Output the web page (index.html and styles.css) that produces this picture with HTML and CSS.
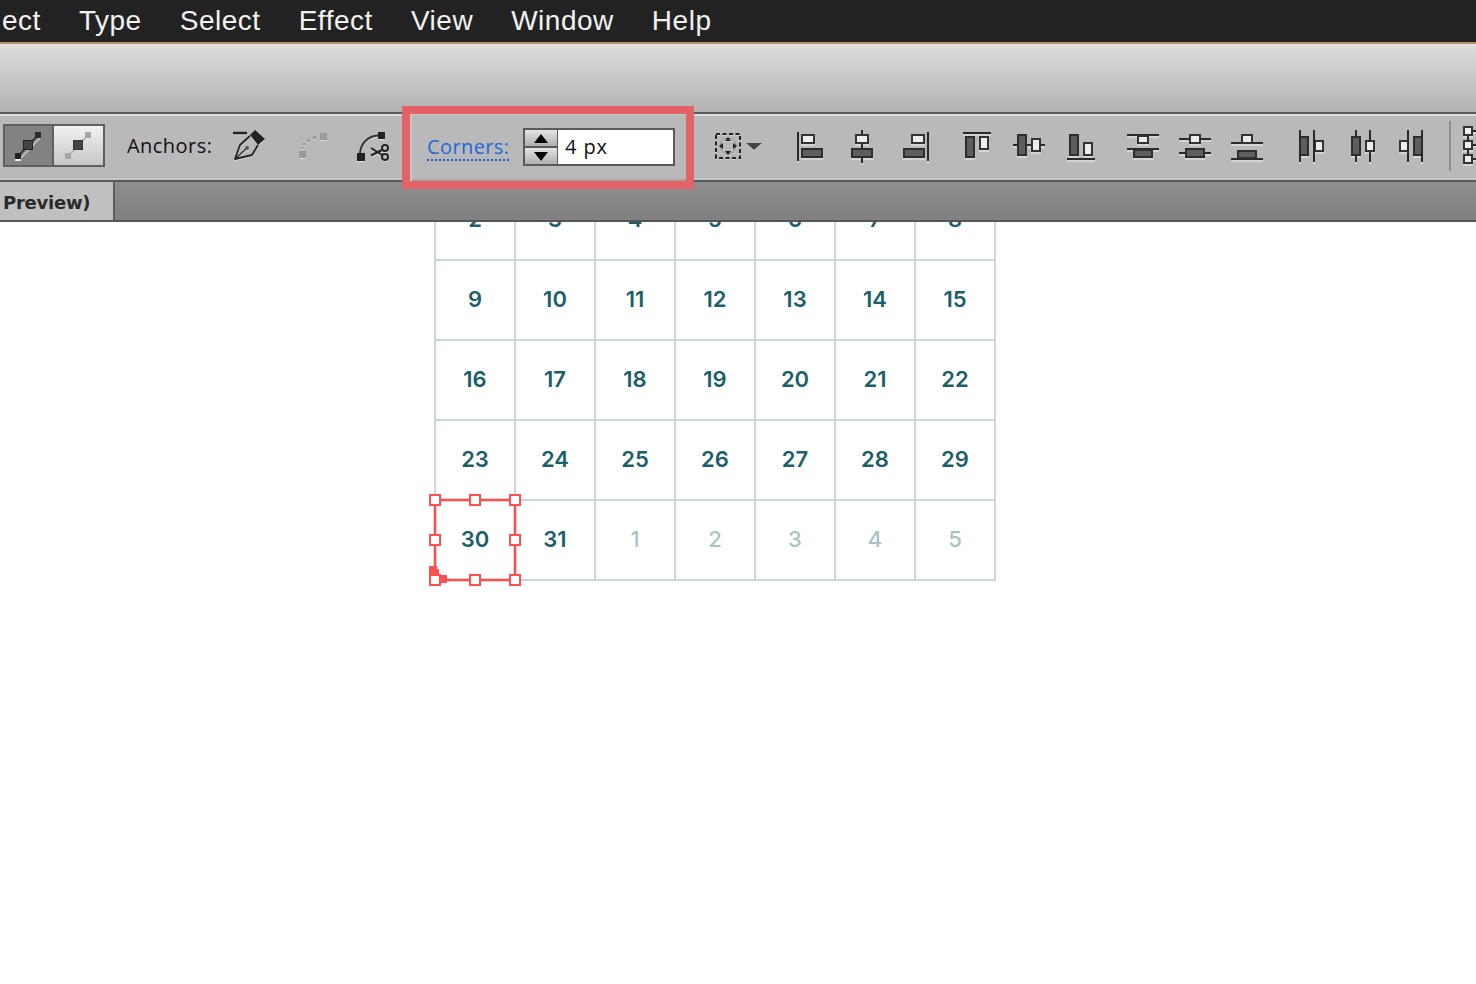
FILE: index.html
```html
<!DOCTYPE html>
<html lang="en">
<head>
<meta charset="utf-8">
<title>Corners</title>
<link rel="stylesheet" href="styles.css">
</head>
<body>
<nav class="menubar">
  <span>ect</span><span>Type</span><span>Select</span><span>Effect</span><span>View</span><span>Window</span><span>Help</span>
</nav>
<div class="appbar"></div>
<div class="toolbar">
  <div class="segmented">
    <div class="seg seg-on">
      <svg width="47" height="39" viewBox="0 0 47 39"><path d="M14 31L34 10" stroke="#c8c8c8" stroke-width="1.500" transform="translate(1 2)"/><path d="M13 30L33 9" stroke="#222" stroke-width="1.500"/><rect x="30" y="6" width="6" height="6" fill="#2b2b2b"/><rect x="18.500" y="14.500" width="9" height="9" fill="#444" stroke="#222"/><rect x="10" y="27" width="6" height="6" fill="#222"/><rect x="10" y="33" width="6" height="2" fill="#eee"/></svg>
    </div>
    <div class="seg seg-off">
      <svg width="47" height="39" viewBox="0 0 47 39"><path d="M13 30L33 9" stroke="#aaa" stroke-width="1.500"/><rect x="30" y="6" width="6" height="6" fill="#a6a6a6"/><rect x="18.500" y="14.500" width="9" height="9" fill="#444" stroke="#333"/><rect x="10" y="27" width="6" height="6" fill="#a6a6a6"/></svg>
    </div>
  </div>
  <span class="label anchors">Anchors:</span>
  <svg class="tool pen" width="34" height="34" viewBox="0 0 34 34"><path d="M0 4H14" stroke="#222" stroke-width="2.500"/><path d="M22 1L32 10L25 16L17 6Z" fill="#222"/><path d="M17 7L7 16L2 30L19 26L25 16" fill="none" stroke="#222" stroke-width="1.800" stroke-linejoin="round"/><path d="M2 30L14 19" stroke="#222" stroke-width="1.200"/><circle cx="14" cy="19" r="2" fill="#555"/></svg>
  <svg class="tool dim" width="30" height="28" viewBox="0 0 30 28"><rect x="1" y="19" width="7" height="7" fill="#999"/><rect x="22" y="1" width="7" height="7" fill="#999"/><rect x="3" y="15" width="2" height="2" fill="#999"/><rect x="5" y="11" width="2" height="2" fill="#999"/><rect x="9" y="7" width="3" height="3" fill="#999"/><rect x="15" y="4" width="3" height="3" fill="#999"/></svg>
  <svg class="tool scissors" width="34" height="30" viewBox="0 0 34 30"><path d="M4 22C5 12 12 5 22 4.500" fill="none" stroke="#333" stroke-width="2"/><rect x="22" y="1" width="7" height="7" fill="#222"/><rect x="1" y="22" width="8" height="8" fill="#222"/><path d="M15 17L27 24.500M15 24.500L27 18.500" stroke="#222" stroke-width="2"/><circle cx="29" cy="17" r="3" fill="none" stroke="#222" stroke-width="2"/><circle cx="29" cy="26" r="3" fill="none" stroke="#222" stroke-width="2"/></svg>
  <div class="corners">
    <a class="corners-link">Corners:</a>
    <div class="spinner">
      <div class="stepper">
        <div class="step"><svg width="14" height="9" viewBox="0 0 14 9"><path d="M7 0L14 9H0Z" fill="#000"/></svg></div>
        <div class="step"><svg width="14" height="9" viewBox="0 0 14 9"><path d="M0 0H14L7 9Z" fill="#000"/></svg></div>
      </div>
      <div class="value">4 px</div>
    </div>
  </div>
  <svg class="ref-point" width="28" height="28" viewBox="0 0 28 28"><rect x="2" y="2" width="24" height="24" fill="none" stroke="#222" stroke-width="2" stroke-dasharray="4 2.5"/><circle cx="14" cy="14" r="8" fill="none" stroke="#888" stroke-width="1"/><path d="M14 5l3 4h-6zM14 23l3-4h-6zM5 14l4-3v6zM23 14l-4-3v6z" fill="#222"/></svg>
  <svg class="ref-caret" width="16" height="7" viewBox="0 0 16 7"><path d="M0 0H16L8 7Z" fill="#444"/></svg>
  <div class="aligns group-a">
    <svg class="al" width="36" height="36" viewBox="792 128 36 36"><path d="M798 132V161" class="ln"/><rect x="802" y="135" width="12" height="8" class="lt"/><rect x="802" y="149" width="20" height="8" class="dk"/></svg>
    <svg class="al" width="36" height="36" viewBox="844 128 36 36"><path d="M862 130V163" class="ln"/><rect x="856" y="135" width="12" height="8" class="lt"/><rect x="852" y="149" width="20" height="8" class="dk"/></svg>
    <svg class="al nudge-right" width="36" height="36" viewBox="898 128 36 36"><path d="M928 132V161" class="ln"/><rect x="912" y="135" width="12" height="8" class="lt"/><rect x="904" y="149" width="20" height="8" class="dk"/></svg>
  </div>
  <div class="aligns group-b">
    <svg class="al" width="36" height="36" viewBox="959 128 36 36"><path d="M963 133H991" class="ln"/><rect x="966" y="137" width="8" height="20" class="dk"/><rect x="980" y="137" width="8" height="12" class="lt"/></svg>
    <svg class="al" width="36" height="36" viewBox="1011 128 36 36"><path d="M1013 145H1045" class="ln"/><rect x="1018" y="135" width="8" height="20" class="dk"/><rect x="1032" y="139" width="8" height="12" class="lt"/></svg>
    <svg class="al" width="36" height="36" viewBox="1063 128 36 36"><path d="M1067 159H1095" class="ln"/><rect x="1070" y="135" width="8" height="20" class="dk"/><rect x="1084" y="143" width="8" height="12" class="lt"/></svg>
  </div>
  <div class="aligns group-c">
    <svg class="al" width="36" height="36" viewBox="1125 128 36 36"><path d="M1127 135H1159M1127 149H1159" class="ln"/><rect x="1138" y="136" width="10" height="7" class="lt"/><rect x="1134" y="150" width="18" height="7" class="dk"/></svg>
    <svg class="al" width="36" height="36" viewBox="1177 128 36 36"><path d="M1179 139H1211M1179 153H1211" class="ln"/><rect x="1190" y="135" width="10" height="8" class="lt"/><rect x="1186" y="149" width="18" height="8" class="dk"/></svg>
    <svg class="al" width="36" height="36" viewBox="1229 128 36 36"><path d="M1231 143H1263M1231 159H1263" class="ln"/><rect x="1242" y="135" width="10" height="8" class="lt"/><rect x="1238" y="151" width="18" height="7" class="dk"/></svg>
  </div>
  <div class="aligns group-d">
    <svg class="al" width="36" height="36" viewBox="1293 128 36 36"><rect x="1300" y="137" width="8" height="18" class="dk"/><rect x="1315" y="141" width="8" height="10" class="lt"/><path d="M1300 130V162M1314 130V162" class="ln"/></svg>
    <svg class="al" width="36" height="36" viewBox="1345 128 36 36"><path d="M1356 130V162M1370 130V162" class="ln"/><rect x="1352" y="137" width="8" height="18" class="dk"/><rect x="1366" y="141" width="8" height="10" class="lt"/></svg>
    <svg class="al nudge-left" width="36" height="36" viewBox="1393 128 36 36"><rect x="1400" y="141" width="8" height="10" class="lt"/><rect x="1414" y="137" width="8" height="18" class="dk"/><path d="M1408 130V162M1422 130V162" class="ln"/></svg>
  </div>
  <div class="sep"></div>
  <svg class="al" width="13" height="40" viewBox="1463 126 13 40"><path d="M1468 136V154M1473 131H1476M1473 145H1476M1473 159H1476" class="ln"/><rect x="1464" y="127" width="8" height="8" class="lt"/><rect x="1464" y="141" width="8" height="8" class="lt"/><rect x="1464" y="155" width="8" height="8" class="lt"/></svg>
</div>
<div class="tabbar">
  <div class="tab">Preview)</div>
</div>
<main class="canvas">
  <div class="calendar">
    <div class="cell">2</div><div class="cell">3</div><div class="cell">4</div><div class="cell">5</div><div class="cell">6</div><div class="cell">7</div><div class="cell">8</div>
    <div class="cell">9</div><div class="cell">10</div><div class="cell">11</div><div class="cell">12</div><div class="cell">13</div><div class="cell">14</div><div class="cell">15</div>
    <div class="cell">16</div><div class="cell">17</div><div class="cell">18</div><div class="cell">19</div><div class="cell">20</div><div class="cell">21</div><div class="cell">22</div>
    <div class="cell">23</div><div class="cell">24</div><div class="cell">25</div><div class="cell">26</div><div class="cell">27</div><div class="cell">28</div><div class="cell">29</div>
    <div class="cell">30</div><div class="cell">31</div><div class="cell muted">1</div><div class="cell muted">2</div><div class="cell muted">3</div><div class="cell muted">4</div><div class="cell muted">5</div>
    <svg class="selection" width="92" height="92" viewBox="0 0 92 92">
      <rect x="6" y="6" width="80" height="80" fill="none" stroke="#ff5050" stroke-width="2.600"/>
      <path d="M0 72H8V75H10V82H0Z" fill="#ff5050"/><rect x="11" y="81" width="7" height="8" fill="#ff5050"/>
      <g fill="#fff" stroke="#ff5050" stroke-width="2">
        <rect x="1" y="1" width="10" height="10"/><rect x="41" y="1" width="10" height="10"/><rect x="81" y="1" width="10" height="10"/>
        <rect x="1" y="41" width="10" height="10"/><rect x="81" y="41" width="10" height="10"/>
        <rect x="1" y="81" width="10" height="10"/><rect x="41" y="81" width="10" height="10"/><rect x="81" y="81" width="10" height="10"/>
      </g>
    </svg>
  </div>
</main>
</body>
</html>
```
FILE: styles.css
```css
* { box-sizing: border-box; }
html, body { margin: 0; padding: 0; }
body {
  width: 1476px;
  height: 984px;
  overflow: hidden;
  background: #fff;
  font-family: "DejaVu Sans", sans-serif;
}
.menubar {
  display: flex;
  gap: 38px;
  height: 44px;
  padding: 0 0 1px 2px;
  align-items: center;
  background: #222;
  border-bottom: 2px solid #b39068;
  color: #f2f2f2;
  font-family: "Liberation Sans", sans-serif;
  font-size: 28px;
  letter-spacing: 0.52px;
}
.appbar {
  height: 68px;
  background: linear-gradient(#e4e4e4 0, #dadada 6%, #d2d2d2 25%, #b2b2b2 100%);
}
.toolbar {
  position: relative;
  display: flex;
  align-items: center;
  height: 70px;
  padding: 0 0 2px 3px;
  background: #b9b9b9;
  border-top: 2px solid #5a5a5a;
  border-bottom: 2px solid #5a5a5a;
  box-shadow: inset 0 2px 0 #dcdcdc, inset 0 -2px 0 #c6c6c6;
}
.segmented {
  display: flex;
  width: 102px;
  height: 43px;
  margin-bottom: 1px;
  border: 2px solid #5f5f5f;
  flex: none;
}
.seg {
  display: flex;
  align-items: center;
  justify-content: center;
  width: 50%;
}
.seg-on { background: #828282; border-right: 2px solid #5f5f5f; }
.seg-off { background: linear-gradient(#f2f2f2, #c6c6c6); }
.label { font-size: 20px; color: #111; white-space: nowrap; }
.anchors { margin: 0 0 2px 22px; width: 85px; letter-spacing: 0.45px; font-family: "Open Sans", sans-serif; font-size: 20px; }
.tool { flex: none; filter: drop-shadow(0 1px 0 #d8d8d8); }
.pen { margin-left: 21px; }
.dim { margin-left: 31px; }
.scissors { margin-left: 28px; }
.corners {
  position: relative;
  display: flex;
  align-items: center;
  flex: none;
  width: 292px;
  height: 83px;
  margin: 3px 0 0 12px;
  padding-left: 17px;
  border: 8px solid #e36266;
  background: #b9b9b9;
  box-shadow: inset 2px 1px 0 #c8c8c8, inset 0 -2px 0 #a6a6a6;
  z-index: 1;
}
.corners-link {
  width: 82px;
  color: #1c68dc;
  font-family: "Open Sans", sans-serif;
  font-size: 20px;
  line-height: 25px;
  letter-spacing: 0.4px;
  white-space: nowrap;
  border-bottom: 2px dotted #1b56d8;
}
.spinner {
  display: flex;
  height: 38px;
  margin: 0 0 1px 14px;
  border: 2px solid #5a5a5a;
  flex: none;
  width: 152px;
}
.stepper {
  display: flex;
  flex-direction: column;
  width: 33px;
  border-right: 1px solid #5a5a5a;
}
.step {
  display: flex;
  flex: 1;
  align-items: center;
  justify-content: center;
  background: linear-gradient(#e4e4e4, #b0b0b0);
}
.step + .step { border-top: 2px solid #5a5a5a; }
.value {
  flex: 1;
  padding-left: 7px;
  background: #fff;
  color: #111;
  font-size: 20px;
  line-height: 34px;
  font-family: "Open Sans", sans-serif;
  letter-spacing: 0.9px;
}
.ref-point { flex: none; margin-left: 20px; filter: drop-shadow(0 1px 0 #d2d2d2); }
.ref-caret { flex: none; margin-left: 4px; filter: drop-shadow(0 1px 0 #d2d2d2); }
.aligns { display: flex; flex: none; gap: 16px; }
.group-a { margin-left: 30px; }
.group-b { margin-left: 25px; }
.group-c { margin-left: 26px; }
.group-d { margin-left: 28px; }
.nudge-right { margin-left: 2px; }
.nudge-left { margin-left: -4px; }
.al { flex: none; display: block; filter: drop-shadow(0 2px 0 #d4d4d4); }
.ln { fill: none; stroke: #2a2a2a; stroke-width: 2; }
.lt { fill: #ededed; stroke: #333; stroke-width: 2; }
.dk { fill: #5e5e5e; stroke: #2e2e2e; stroke-width: 2; }
.sep {
  flex: none;
  width: 2px;
  height: 50px;
  margin: 0 12px 0 20px;
  background: #8c8c8c;
}
.tabbar {
  display: flex;
  height: 40px;
  background: linear-gradient(#8e8e8e, #808080);
  border-bottom: 2px solid #555;
}
.tab {
  width: 115px;
  padding-left: 3px;
  background: #c0c0c0;
  border-right: 2px solid #5e5e5e;
  color: #2a2a2a;
  font-family: "DejaVu Sans", sans-serif;
  font-weight: 700;
  font-size: 18px;
  letter-spacing: -0.25px;
  line-height: 41px;
}
.canvas {
  position: relative;
  height: 762px;
  overflow: hidden;
}
.calendar {
  position: relative;
  display: grid;
  grid-template-columns: repeat(7, 80px);
  grid-auto-rows: 80px;
  width: 562px;
  margin: -41px 0 0 434px;
  border-left: 2px solid #c9d8d9;
  color: #1b5f6b;
}
.cell {
  display: flex;
  align-items: center;
  justify-content: center;
  padding: 0 0 2px 0;
  border-right: 2px solid #c9d8d9;
  border-bottom: 2px solid #c9d8d9;
  font-family: "Inter", sans-serif;
  font-weight: 600;
  font-size: 22px;
}
.muted { color: #a9c3c5; font-weight: 500; }
.selection {
  position: absolute;
  left: -7px;
  top: 313px;
}
```
